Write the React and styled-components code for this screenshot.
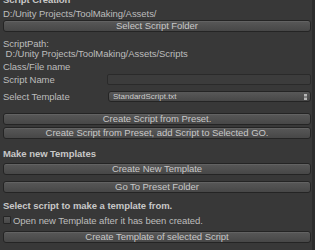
import React from "react";
import styled, { createGlobalStyle } from "styled-components";

const Global = createGlobalStyle`
  html, body { margin: 0; padding: 0; background: #383838; overflow: hidden; }
  * { box-sizing: border-box; }
`;

const Window = styled.div`
  display: flex;
  width: 315px;
  height: 250px;
  overflow: hidden;
  background: #383838;
  font-family: "Liberation Sans", Arial, sans-serif;
  font-size: 9.5px;
  letter-spacing: -0.05px;
  color: #bdbdbd;
`;

const Panel = styled.div`
  flex: 1;
  display: flex;
  flex-direction: column;
  padding: 0 1px 0 3px;
  min-width: 0;
`;

const Edge = styled.div`
  width: 3px;
  background: #2c2c2c;
`;

const Heading = styled.div`
  height: 12px;
  line-height: 12px;
  font-weight: bold;
  color: #c8c8c8;
  white-space: nowrap;
  margin-top: ${(p) => p.$mt ?? 0}px;
`;

const Label = styled.div`
  height: ${(p) => p.$h ?? 12}px;
  line-height: ${(p) => p.$lh ?? 12}px;
  white-space: pre;
  margin-top: ${(p) => p.$mt ?? 0}px;
`;

const Button = styled.div`
  height: 12px;
  margin-top: ${(p) => p.$mt ?? 0}px;
  border: 1px solid #242424;
  border-radius: 3px;
  background: linear-gradient(#585858, #474747);
  box-shadow: inset 0 1px 0 rgba(255, 255, 255, 0.07);
  display: flex;
  align-items: center;
  justify-content: center;
  line-height: 10px;
  color: #c8c8c8;
  white-space: nowrap;
`;

const FieldRow = styled.div`
  display: grid;
  grid-template-columns: 104px 1fr;
  align-items: center;
  height: 11px;
  margin-top: ${(p) => p.$mt ?? 0}px;
`;

const TextField = styled.div`
  height: 11px;
  border: 1px solid #2a2a2a;
  border-radius: 2px;
  background: #3c3c3c;
`;

const Dropdown = styled.div`
  height: 11px;
  margin-left: 1px;
  border: 1px solid #242424;
  border-radius: 3px;
  background: linear-gradient(#585858, #474747);
  display: flex;
  align-items: center;
  justify-content: space-between;
  padding: 0 3px 0 4px;
  font-size: 8px;
  letter-spacing: 0;
  color: #cccccc;
  line-height: 9px;
`;

const ToggleRow = styled.div`
  display: flex;
  align-items: center;
  gap: 2px;
  height: 12px;
  margin-top: ${(p) => p.$mt ?? 0}px;
  white-space: nowrap;
`;

const Check = styled.span`
  width: 8px;
  height: 8px;
  border: 1px solid #252525;
  border-radius: 1px;
  background: linear-gradient(#585858, #484848);
  flex: none;
`;

const Arrows = () => (
  <svg width="3" height="6" viewBox="0 0 3 6">
    <rect x="0" y="0" width="3" height="2.5" fill="#b8b8b8" />
    <rect x="0" y="3.5" width="3" height="2.5" fill="#b8b8b8" />
  </svg>
);

export default function App() {
  return (
    <>
      <Global />
      <Window>
        <Panel>
          <Heading $mt={-6}>Script Creation</Heading>
          <Label $mt={2}>D:/Unity Projects/ToolMaking/Assets/</Label>
          <Button>Select Script Folder</Button>
          <Label $mt={7} $h={20} $lh={10}>
            {"ScriptPath:\n D:/Unity Projects/ToolMaking/Assets/Scripts"}
          </Label>
          <Label $mt={2}>Class/File name</Label>
          <FieldRow $mt={1}>
            <span>Script Name</span>
            <TextField />
          </FieldRow>
          <FieldRow $mt={6}>
            <span>Select Template</span>
            <Dropdown>
              <span>StandardScript.txt</span>
              <Arrows />
            </Dropdown>
          </FieldRow>
          <Button $mt={11}>Create Script from Preset.</Button>
          <Button $mt={2}>Create Script from Preset, add Script to Selected GO.</Button>
          <Heading $mt={9}>Make new Templates</Heading>
          <Button $mt={3}>Create New Template</Button>
          <Button $mt={6}>Go To Preset Folder</Button>
          <Heading $mt={7}>Select script to make a template from.</Heading>
          <ToggleRow $mt={2}>
            <Check />
            <span>Open new Template after it has been created.</span>
          </ToggleRow>
          <Button $mt={5}>Create Template of selected Script</Button>
        </Panel>
        <Edge />
      </Window>
    </>
  );
}
